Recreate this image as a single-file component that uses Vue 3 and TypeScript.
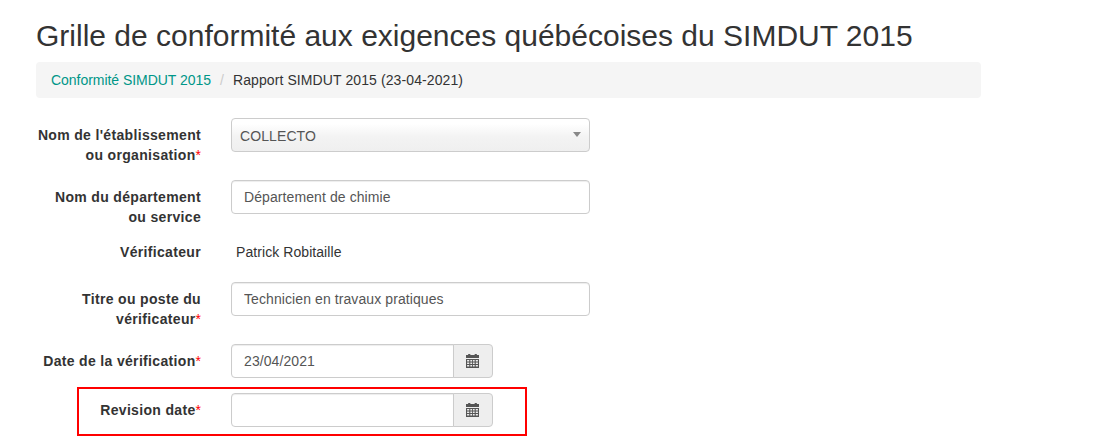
<script setup lang="ts">
const breadcrumbLink = "Conformité SIMDUT 2015";
const breadcrumbCurrent = "Rapport SIMDUT 2015 (23-04-2021)";
</script>

<template>
  <div class="page">
    <h1 class="page__title">Grille de conformité aux exigences québécoises du SIMDUT 2015</h1>

    <ol class="breadcrumb">
      <li class="breadcrumb__link">{{ breadcrumbLink }}</li>
      <li class="breadcrumb__sep">/</li>
      <li class="breadcrumb__current">{{ breadcrumbCurrent }}</li>
    </ol>

    <form class="form" @submit.prevent>
      <div class="row row--select">
        <label class="row__label">Nom de l'établissement<br />ou organisation<span class="req">*</span></label>
        <div class="select">
          <span>COLLECTO</span>
          <i class="select__arrow"></i>
        </div>
      </div>

      <div class="row row--dept">
        <label class="row__label">Nom du département<br />ou service</label>
        <input class="input" type="text" value="Département de chimie" />
      </div>

      <div class="row row--static">
        <label class="row__label">Vérificateur</label>
        <p class="row__value">Patrick Robitaille</p>
      </div>

      <div class="row row--title">
        <label class="row__label">Titre ou poste du<br />vérificateur<span class="req">*</span></label>
        <input class="input" type="text" value="Technicien en travaux pratiques" />
      </div>

      <div class="row row--date">
        <label class="row__label">Date de la vérification<span class="req">*</span></label>
        <div class="date">
          <input class="input date__input" type="text" value="23/04/2021" />
          <span class="date__addon">
            <svg class="date__icon" viewBox="1 0 12 14" width="13" height="14" preserveAspectRatio="none">
              <path d="M1 1h2V0h2v1h4V0h2v1h2v3H1z" fill="#555" />
              <path
                fill-rule="evenodd"
                d="M1 5h12v9H1zM2 6v1.500h2V6zM5 6v1.500h1.600V6zM7.400 6v1.500H9V6zM10 6v1.500h2V6zM2 8.500v1.500h2V8.500zM5 8.500v1.500h1.600V8.500zM7.400 8.500v1.500H9V8.500zM10 8.500v1.500h2V8.500zM2 11v1.500h2V11zM5 11v1.500h1.600V11zM7.400 11v1.500H9V11zM10 11v1.500h2V11z"
                fill="#555"
              />
            </svg>
          </span>
        </div>
      </div>

      <div class="row">
        <label class="row__label">Revision date<span class="req">*</span></label>
        <div class="date">
          <input class="input date__input" type="text" value="" />
          <span class="date__addon">
            <svg class="date__icon" viewBox="1 0 12 14" width="13" height="14" preserveAspectRatio="none">
              <path d="M1 1h2V0h2v1h4V0h2v1h2v3H1z" fill="#555" />
              <path
                fill-rule="evenodd"
                d="M1 5h12v9H1zM2 6v1.500h2V6zM5 6v1.500h1.600V6zM7.400 6v1.500H9V6zM10 6v1.500h2V6zM2 8.500v1.500h2V8.500zM5 8.500v1.500h1.600V8.500zM7.400 8.500v1.500H9V8.500zM10 8.500v1.500h2V8.500zM2 11v1.500h2V11zM5 11v1.500h1.600V11zM7.400 11v1.500H9V11zM10 11v1.500h2V11z"
                fill="#555"
              />
            </svg>
          </span>
        </div>
        <div class="highlight"></div>
      </div>
    </form>
  </div>
</template>

<style>
html,
body {
  margin: 0;
  background: #fff;
}
</style>

<style scoped>
.page {
  width: 945px;
  padding: 20px 0 15px 36px;
  font-family: "Liberation Sans", Arial, sans-serif;
  font-size: 14px;
  line-height: 20px;
  color: #333;
}

.page__title {
  margin: 0 0 10px;
  font-size: 30px;
  font-weight: 400;
  line-height: 32px;
  color: #333;
}

.breadcrumb {
  display: flex;
  margin: 0 0 20px;
  padding: 8px 15px;
  list-style: none;
  letter-spacing: 0.1px;
  background: #f5f5f5;
  border-radius: 4px;
}

.breadcrumb__link {
  letter-spacing: -0.04px;
  color: #009688;
}

.breadcrumb__sep {
  padding: 0 9px;
  color: #ccc;
}

.breadcrumb__current {
  color: #333;
}

.form {
  display: flex;
  flex-direction: column;
}

.row {
  position: relative;
  display: grid;
  grid-template-columns: 165px 359px;
  column-gap: 30px;
  align-items: start;
}

.row--select {
  margin-bottom: 15px;
}

.row--dept {
  margin-bottom: 8px;
}

.row--static {
  margin-bottom: 20px;
}

.row--title {
  margin-bottom: 15px;
}

.row--date {
  margin-bottom: 15px;
}

.row__label {
  padding-top: 7px;
  font-weight: 700;
  letter-spacing: 0.33px;
  text-align: right;
}

.row__value {
  margin: 0;
  padding: 7px 0 0 5px;
  letter-spacing: 0.07px;
}

.req {
  letter-spacing: 0;
  font-weight: 400;
  color: #f00;
}

.input {
  display: block;
  box-sizing: border-box;
  width: 100%;
  height: 34px;
  padding: 6px 12px;
  font: inherit;
  letter-spacing: 0.09px;
  color: #555;
  background: #fff;
  border: 1px solid #ccc;
  border-radius: 4px;
  box-shadow: inset 0 1px 1px rgba(0, 0, 0, 0.075);
  outline: none;
}

.select {
  display: flex;
  align-items: center;
  justify-content: space-between;
  box-sizing: border-box;
  height: 34px;
  padding: 1px 8px 0;
  letter-spacing: 0.1px;
  color: #555;
  background: linear-gradient(to bottom, #fff 15%, #f3f3f3 55%, #efefef 100%);
  border: 1px solid #ccc;
  border-radius: 4px;
}

.select__arrow {
  margin-top: -2px;
  width: 0;
  height: 0;
  border-top: 5px solid #888;
  border-left: 4px solid transparent;
  border-right: 4px solid transparent;
}

.date {
  display: flex;
  width: 262px;
}

.date__input {
  flex: 1;
  min-width: 0;
  border-radius: 4px 0 0 4px;
}

.date__addon {
  display: flex;
  align-items: center;
  justify-content: center;
  box-sizing: border-box;
  width: 40px;
  height: 34px;
  margin-left: -1px;
  background: #eee;
  border: 1px solid #ccc;
  border-radius: 0 4px 4px 0;
}

.date__icon {
  display: block;
  margin-right: 1px;
}

.highlight {
  position: absolute;
  left: 41px;
  top: -6px;
  width: 450px;
  height: 49px;
  box-sizing: border-box;
  border: 2px solid #f00;
  pointer-events: none;
}
</style>
